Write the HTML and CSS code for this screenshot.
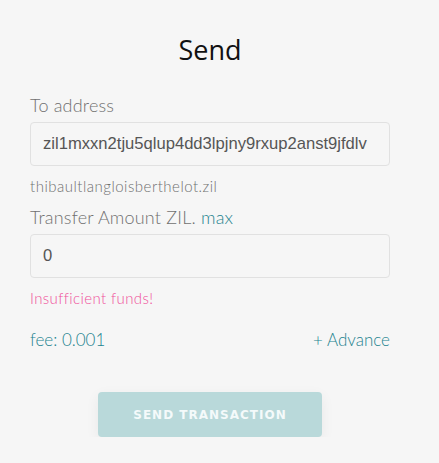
FILE: index.html
```html
<!DOCTYPE html>
<html lang="en">
<head>
    <meta charset="UTF-8">
    <meta name="viewport" content="width=device-width, initial-scale=1.0">
    <title>Send</title>
    <link rel="stylesheet" href="styles.css">
</head>
<body>
    <form class="send-form">
        <h1 class="title">Send</h1>
        <div class="form-group">
            <label for="address">To address</label>
            <input type="text" id="address" value="zil1mxxn2tju5qlup4dd3lpjny9rxup2anst9jfdlv">
            <div class="hint">thibaultlangloisberthelot.zil</div>
        </div>
        <div class="form-group">
            <label for="amount">Transfer Amount ZIL. <span class="link">max</span></label>
            <input type="text" id="amount" value="0">
            <div class="error">Insufficient funds!</div>
        </div>
        <div class="fee-row">
            <span class="link">fee: 0.001</span>
            <span class="link">+ Advance</span>
        </div>
        <div class="actions">
            <button type="submit" disabled>Send transaction</button>
        </div>
    </form>
</body>
</html>
```

FILE: styles.css
```css
body {
    margin: 0;
    background-color: #f6f6f6;
    font-family: Lato, "Open Sans", sans-serif;
    font-weight: 300;
    color: #666;
}
.send-form {
    width: 360px;
    margin-left: 30px;
    padding-top: 30px;
}
.title {
    margin: 0 0 25px;
    text-align: center;
    font-family: "Open Sans", sans-serif;
    font-size: 27px;
    font-weight: 400;
    line-height: 40px;
    color: #111;
}
.form-group {
    margin-bottom: 12px;
}
label {
    display: block;
    margin-bottom: 7px;
    font-size: 18px;
    line-height: 20px;
    letter-spacing: 0.2px;
    color: #707070;
}
input {
    display: block;
    width: 100%;
    height: 44px;
    padding: 0 12px;
    box-sizing: border-box;
    border: 1px solid #e1e1e1;
    border-radius: 4px;
    background-color: #f6f6f6;
    font-family: "Liberation Sans", Arial, sans-serif;
    font-size: 16.6px;
    color: #555;
}
.hint {
    margin-top: 11px;
    font-size: 15px;
    line-height: 18px;
    letter-spacing: 0.5px;
    color: #707070;
}
.error {
    margin-top: 11px;
    font-size: 15px;
    line-height: 18px;
    letter-spacing: 0.4px;
    color: #f0509a;
}
.link {
    color: #23838f;
}
.fee-row {
    display: flex;
    justify-content: space-between;
    margin-top: 23px;
    font-size: 17px;
    line-height: 20px;
}
.actions {
    display: flex;
    justify-content: center;
    margin-top: 42px;
}
button {
    width: 224px;
    height: 45px;
    border: none;
    border-radius: 4px;
    background-color: #b9d9da;
    box-shadow: 0 4px 14px rgba(0, 0, 0, 0.06);
    color: #f4fafa;
    font-family: "DejaVu Sans", sans-serif;
    font-size: 12px;
    font-weight: bold;
    letter-spacing: 1px;
    text-transform: uppercase;
}
```
